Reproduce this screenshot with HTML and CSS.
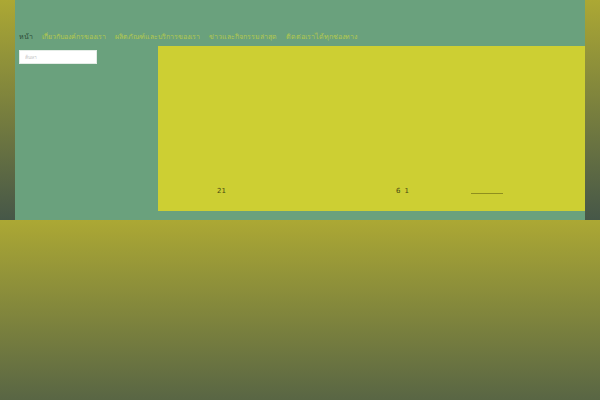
FILE: index.html
```html
<!DOCTYPE html>
<html lang="th">
<head>
<meta charset="utf-8">
<title>หน้าแรก</title>
<link rel="stylesheet" href="styles.css">
</head>
<body>
<div class="page">
  <nav class="nav">
    <a class="nav-item current" href="#">หน้า</a>
    <a class="nav-item" href="#">เกี่ยวกับองค์กรของเรา</a>
    <a class="nav-item" href="#">ผลิตภัณฑ์และบริการของเรา</a>
    <a class="nav-item" href="#">ข่าวและกิจกรรมล่าสุด</a>
    <a class="nav-item" href="#">ติดต่อเราได้ทุกช่องทาง</a>
  </nav>
  <div class="content">
    <aside class="sidebar">
      <input class="search" type="text" placeholder="ค้นหา">
    </aside>
    <main class="main">
      <div class="row">
        <span class="cell c1">21</span>
        <span class="cell c2">6</span>
        <span class="cell c3">1</span>
        <span class="cell line"></span>
      </div>
    </main>
  </div>
</div>
</body>
</html>
```
FILE: styles.css
```css
html {
  background: linear-gradient(#aca834, #465748);
}
body {
  margin: 0;
  font-family: "DejaVu Sans", sans-serif;
}
.page {
  margin: 0 15px;
  background: #6aa17d;
  padding: 32px 0 9px 4px;
}
.nav {
  display: flex;
  gap: 9px;
  height: 10px;
  align-items: center;
  font-size: 7px;
  line-height: 10px;
}
.nav-item {
  color: #b4c94e;
  text-decoration: none;
  white-space: nowrap;
}
.nav-item.current {
  color: #2a4a36;
}
.content {
  display: flex;
  margin-top: 4px;
}
.sidebar {
  width: 139px;
  padding-top: 4px;
}
.search {
  display: block;
  box-sizing: border-box;
  width: 78px;
  height: 14px;
  margin: 0;
  padding: 0 5px;
  border: 1px solid #e4ece6;
  background: #fff;
  font-family: "DejaVu Sans", sans-serif;
  font-size: 5px;
  color: #333;
}
.search::placeholder {
  color: #c8c8c8;
}
.main {
  flex: 1;
  height: 165px;
  background: #cdcf33;
  display: flex;
  flex-direction: column;
  justify-content: flex-end;
  padding-bottom: 16px;
  box-sizing: border-box;
}
.row {
  display: flex;
  align-items: center;
  font-size: 7px;
  line-height: 8px;
  color: #4a4a12;
  height: 8px;
}
.c1 { margin-left: 59px; }
.c2 { margin-left: 170px; }
.c3 { margin-left: 4px; }
.line {
  margin-left: 62px;
  width: 32px;
  height: 0;
  border-top: 1px solid #8f8f1e;
  margin-top: 5px;
}
```
